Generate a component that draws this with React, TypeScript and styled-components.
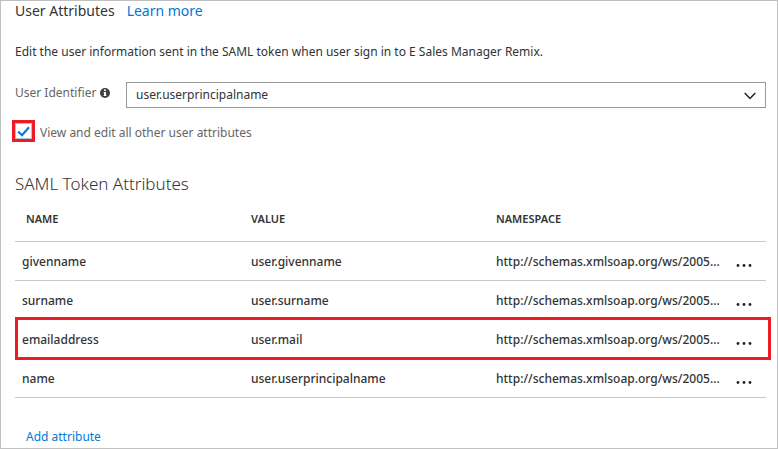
import React, { useState } from "react";
import styled, { createGlobalStyle } from "styled-components";

const GlobalStyle = createGlobalStyle`
  * { box-sizing: border-box; }
  body {
    margin: 0;
    background: #fff;
    color: #333;
    font-family: "Segoe UI", "Noto Sans", "Open Sans", sans-serif;
    font-size: 12px;
    line-height: 18px;
  }
`;

const accent = "#0078d7";
const marker = "#ed1c24";

const Panel = styled.main`
  min-height: 100vh;
  border: 1px solid #c0c0c0;
  padding: 0 11px 2px 14px;
`;

const TitleBar = styled.header`
  display: flex;
  align-items: baseline;
  gap: 12px;
`;

const Title = styled.h1`
  margin: 0;
  font-size: 14px;
  font-weight: 400;
  line-height: 20px;
`;

const Link = styled.a<{ $large?: boolean }>`
  color: ${accent};
  text-decoration: none;
  font-size: ${(p) => (p.$large ? "14px" : "12px")};
`;

const Intro = styled.p`
  margin: 22px 0 0;
`;

const Field = styled.div`
  display: flex;
  margin-top: 21px;
`;

const FieldLabel = styled.label`
  display: flex;
  align-items: center;
  gap: 4px;
  width: 111px;
  height: 22px;
  color: #666;
`;

const SelectWrap = styled.div`
  position: relative;
  flex: 1;
  display: flex;
`;

const Select = styled.select`
  flex: 1;
  height: 26px;
  padding: 0 32px 0 9px;
  appearance: none;
  border: 1px solid #999;
  border-radius: 0;
  background: #fff;
  color: #333;
  font: inherit;
`;

const Chevron = styled.svg`
  position: absolute;
  right: 10px;
  top: 10px;
  pointer-events: none;
`;

const CheckLabel = styled.label`
  display: flex;
  align-items: flex-end;
  gap: 5px;
  width: max-content;
  margin: 12px 0 0 -3px;
  color: #666;
`;

const CheckFrame = styled.span`
  display: grid;
  width: 23px;
  height: 22px;
  border: 3px solid ${marker};

  > * { grid-area: 1 / 1; }
`;

const Checkbox = styled.input`
  appearance: none;
  width: 100%;
  height: 100%;
  margin: 0;
  border: 1px solid #b4c4d0;
`;

const Tick = styled.svg`
  place-self: center;
  pointer-events: none;
`;

const SectionTitle = styled.h2`
  margin: 30px 0 0;
  font-size: 17px;
  font-weight: 300;
  line-height: 24px;
`;

const Table = styled.table`
  width: 100%;
  border-collapse: separate;
  border-spacing: 0;
  table-layout: fixed;
`;

const Column = styled.col<{ $width?: number }>`
  width: ${(p) => (p.$width ? `${p.$width}px` : "auto")};
`;

const HeadCell = styled.th`
  height: 46px;
  padding: 0;
  border-bottom: 1px solid #c8c8c8;
  font-size: 11px;
  font-weight: 600;
  text-align: left;

  &:first-child { padding-left: 11px; }
`;

const Row = styled.tr<{ $marked?: boolean }>`
  position: relative;

  > :last-child::after {
    content: "";
    display: ${(p) => (p.$marked ? "block" : "none")};
    position: absolute;
    inset: -3px -5px -1px 0;
    border: 3px solid ${marker};
    pointer-events: none;
  }
`;

const Cell = styled.td`
  height: 39px;
  padding: 1px 0 0;
  border-bottom: 1px solid #c8c8c8;
  font-weight: 500;
  white-space: nowrap;

  &:first-child { padding-left: 7px; }
`;

const MoreButton = styled.button`
  display: flex;
  margin-top: 8px;
  padding: 4px 0;
  border: 0;
  background: none;
  color: #222;
`;

const Footer = styled.footer`
  padding: 30px 0 0 11px;
`;

const attributes = [
  { name: "givenname", value: "user.givenname" },
  { name: "surname", value: "user.surname" },
  { name: "emailaddress", value: "user.mail", marked: true },
  { name: "name", value: "user.userprincipalname" },
];

function InfoIcon() {
  return (
    <svg width="10" height="10" viewBox="0 0 10 10" aria-hidden="true">
      <circle cx="5" cy="5" r="5" fill="#404040" />
      <path d="M4 1.4h2v1.5H4zM3.5 4H6v3.2h.6V8H3.4v-.8H4V4.8h-.5z" fill="#fff" />
    </svg>
  );
}

export default function App() {
  const [expanded, setExpanded] = useState(true);

  return (
    <>
      <GlobalStyle />
      <Panel>
        <TitleBar>
          <Title>User Attributes</Title>
          <Link href="#learn-more" $large>Learn more</Link>
        </TitleBar>
        <Intro>
          Edit the user information sent in the SAML token when user sign in to E Sales Manager Remix.
        </Intro>
        <Field>
          <FieldLabel htmlFor="identifier">
            User Identifier
            <InfoIcon />
          </FieldLabel>
          <SelectWrap>
            <Select id="identifier" defaultValue="user.userprincipalname">
              <option>user.userprincipalname</option>
              <option>user.mail</option>
            </Select>
            <Chevron width="12" height="8" viewBox="0 0 12 8" aria-hidden="true">
              <path d="M.7 1 6 6.5 11.3 1" fill="none" stroke="#222" strokeWidth="1.5" />
            </Chevron>
          </SelectWrap>
        </Field>
        <CheckLabel>
          <CheckFrame>
            <Checkbox
              type="checkbox"
              checked={expanded}
              onChange={(e) => setExpanded(e.target.checked)}
            />
            {expanded && (
              <Tick width="13" height="11" viewBox="0 0 13 11" aria-hidden="true">
                <path d="M1.2 5.4 5 9.2 12 1.2" fill="none" stroke={accent} strokeWidth="2.1" />
              </Tick>
            )}
          </CheckFrame>
          View and edit all other user attributes
        </CheckLabel>
        <SectionTitle>SAML Token Attributes</SectionTitle>
        <Table>
          <colgroup>
            <Column $width={236} />
            <Column $width={245} />
            <Column />
            <Column $width={30} />
          </colgroup>
          <thead>
            <tr>
              <HeadCell scope="col">NAME</HeadCell>
              <HeadCell scope="col">VALUE</HeadCell>
              <HeadCell scope="col">NAMESPACE</HeadCell>
              <HeadCell as="td" />
            </tr>
          </thead>
          <tbody>
            {attributes.map((a) => (
              <Row key={a.name} $marked={a.marked}>
                <Cell>{a.name}</Cell>
                <Cell>{a.value}</Cell>
                <Cell>http://schemas.xmlsoap.org/ws/2005...</Cell>
                <Cell>
                  <MoreButton type="button" aria-label={`More actions for ${a.name}`}>
                    <svg width="17" height="3" viewBox="0 0 17 3" fill="currentColor" aria-hidden="true">
                      <circle cx="2" cy="1.5" r="1.4" />
                      <circle cx="8" cy="1.5" r="1.4" />
                      <circle cx="14" cy="1.5" r="1.4" />
                    </svg>
                  </MoreButton>
                </Cell>
              </Row>
            ))}
          </tbody>
        </Table>
        <Footer>
          <Link href="#add-attribute">Add attribute</Link>
        </Footer>
      </Panel>
    </>
  );
}
